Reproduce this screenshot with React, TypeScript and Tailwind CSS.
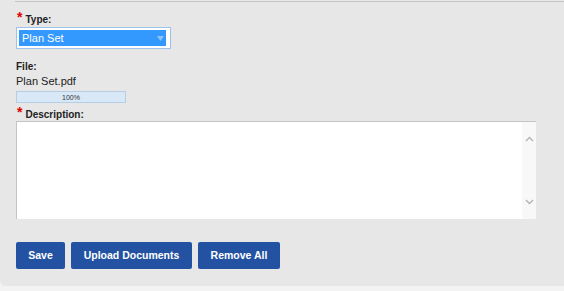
import React from 'react';

function Req() {
  return <span className="text-[#e00000] text-[14px] leading-none font-bold relative top-[-2px] ml-[1px] mr-[3px]">*</span>;
}

export default function App() {
  return (
    <div className="w-[564px] h-[291px] bg-[#f3f3f3] font-['Liberation_Sans',Arial,sans-serif] text-[#222]">
      <div className="h-[286px] bg-[#e7e7e7] rounded-bl-[6px] pt-[1px]">
        <div className="ml-[15px] border-t border-[#c4c4c4]" />

        <div className="pl-[16px]">
          {/* Type */}
          <div className="mt-[12px] h-[12px] flex items-end text-[10px] font-bold leading-[12px]">
            <Req />
            <span>Type:</span>
          </div>
          <div className="mt-[1px] w-[155px] h-[22px] bg-white border border-[#9cc3ec] flex items-center pl-[2px] pr-[4px]">
            <div className="flex-1 h-[16px] bg-[#3399ff] flex items-center justify-between pl-[3px] pr-[2px]">
              <span className="text-white text-[11px] leading-none">Plan Set</span>
              <svg width="7" height="5" viewBox="0 0 7 5">
                <path d="M0 0 L7 0 L3.5 5 Z" fill="#8fc2f5" />
              </svg>
            </div>
          </div>

          {/* File */}
          <div className="mt-[12px] text-[10px] font-bold leading-[12px]">File:</div>
          <div className="mt-[2px] text-[11px] leading-[13px]">Plan Set.pdf</div>
          <div className="mt-[3px] w-[110px] h-[12px] bg-[#d9e8f7] border border-[#b7cde3] flex items-center justify-center">
            <span className="text-[7px] leading-none text-[#333]">100%</span>
          </div>

          {/* Description */}
          <div className="mt-[5px] h-[13px] flex items-end text-[10px] font-bold leading-[12px]">
            <Req />
            <span>Description:</span>
          </div>
          <div className="w-[520px] h-[98px] bg-white border-t border-l border-[#c4c4c4] flex">
            <div className="flex-1" />
            <div className="w-[14px] bg-[#f8f8f8] flex flex-col items-center justify-between py-[14px]">
              <svg width="9" height="6" viewBox="0 0 9 6">
                <path d="M1 5 L4.5 1.5 L8 5" stroke="#b3b3b3" strokeWidth="1.4" fill="none" />
              </svg>
              <svg width="9" height="6" viewBox="0 0 9 6">
                <path d="M1 1 L4.5 4.5 L8 1" stroke="#b3b3b3" strokeWidth="1.4" fill="none" />
              </svg>
            </div>
          </div>

          {/* Buttons */}
          <div className="mt-[23px] flex gap-[6px]">
            <button className="h-[27px] w-[49px] bg-[#2352a3] rounded-[2px] text-white text-[10.5px] font-bold">Save</button>
            <button className="h-[27px] w-[121px] bg-[#2352a3] rounded-[2px] text-white text-[10.5px] font-bold">Upload Documents</button>
            <button className="h-[27px] w-[82px] bg-[#2352a3] rounded-[2px] text-white text-[10.5px] font-bold">Remove All</button>
          </div>
        </div>
      </div>
    </div>
  );
}
